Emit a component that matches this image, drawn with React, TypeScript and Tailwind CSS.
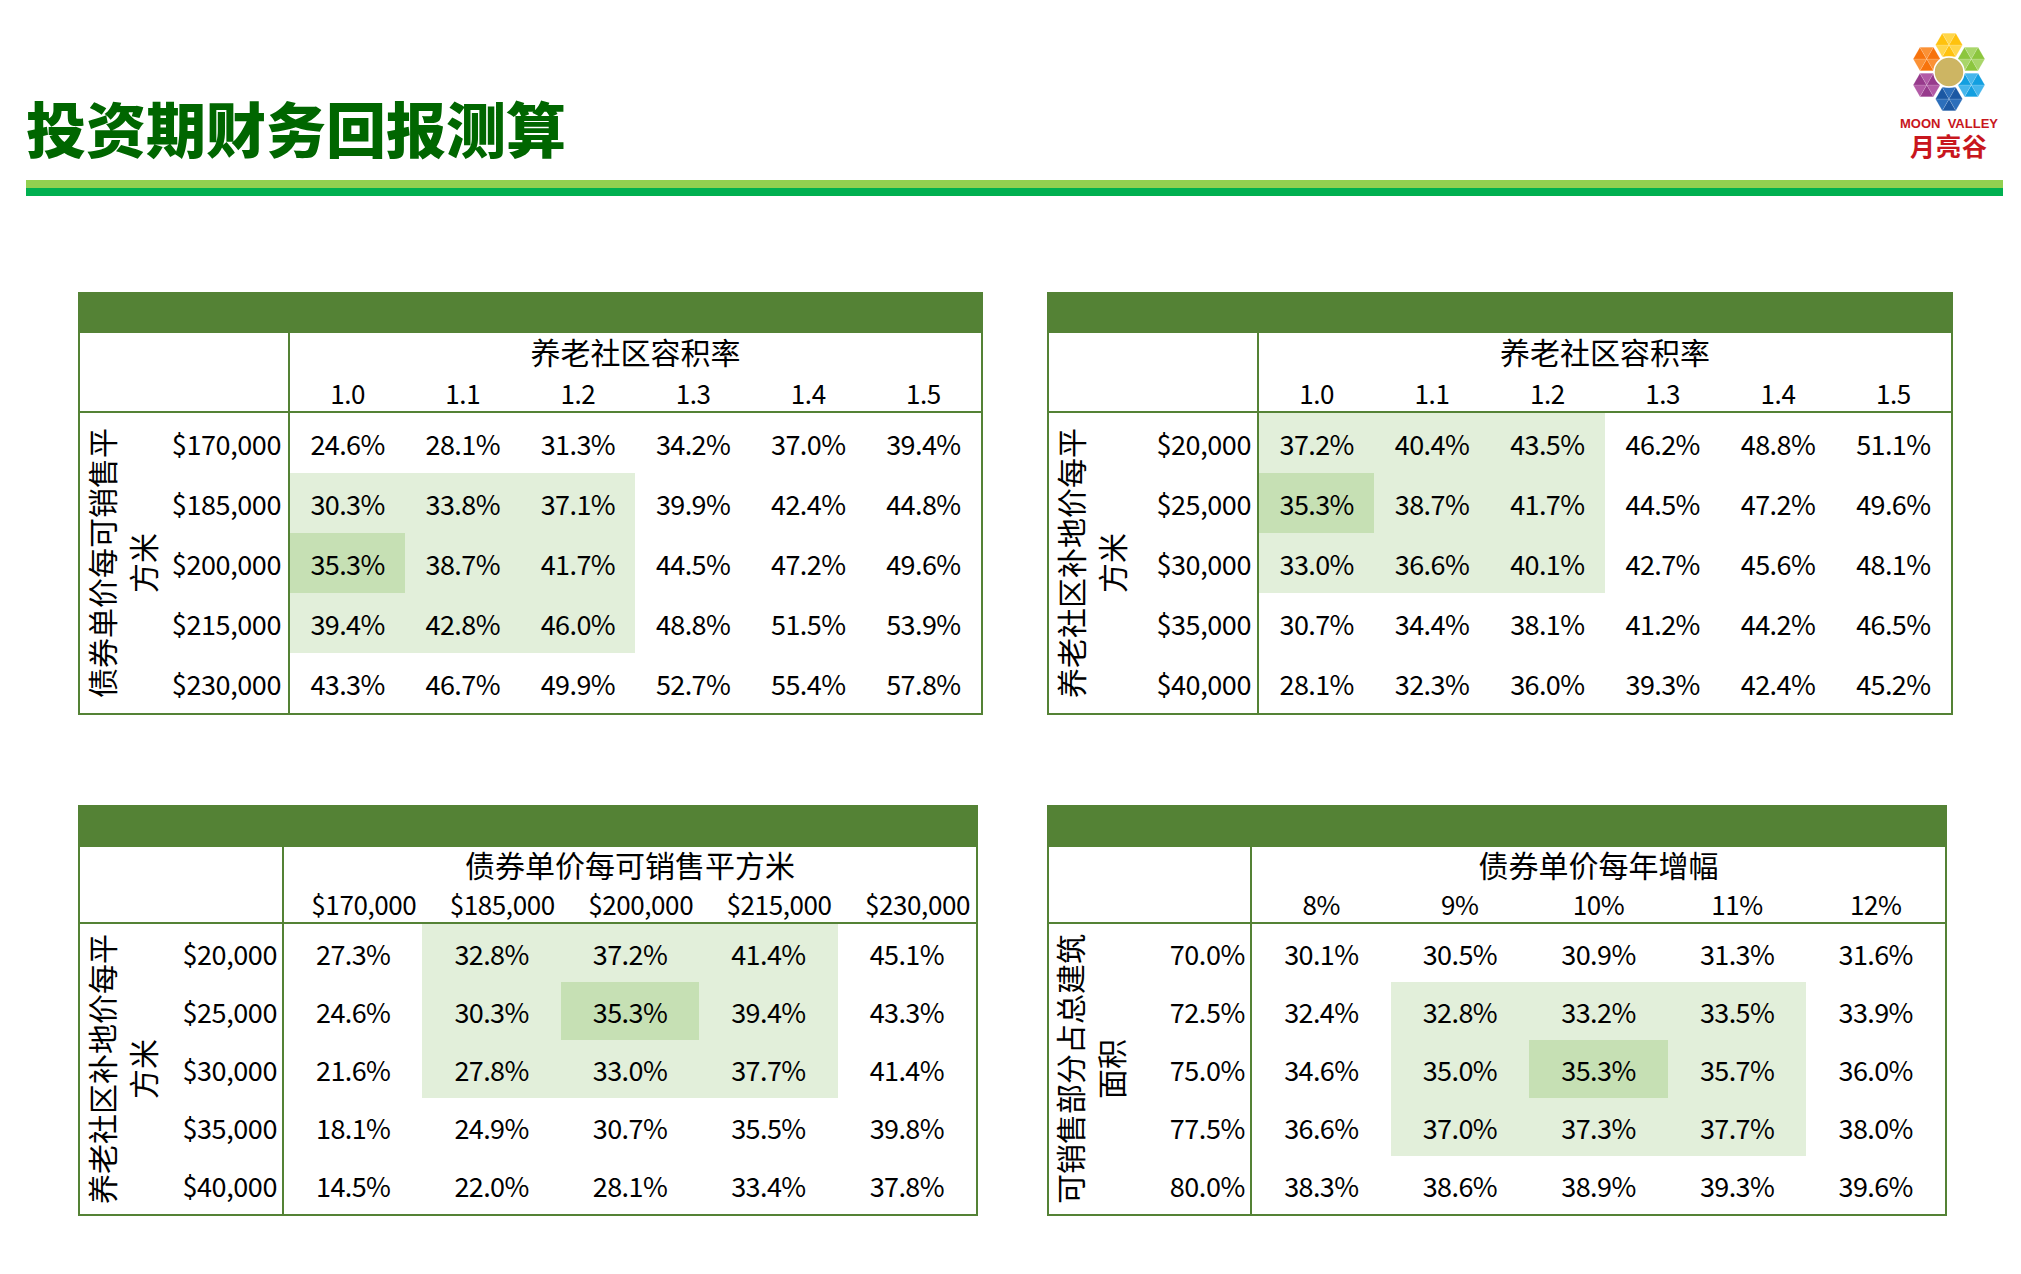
import React from 'react';

type Cfg = {
  w: string;
  cols: string;
  span: string;
  bar: string;
  titleH: string;
  subH: string;
  rowH: string;
  title: string;
  heads: string[];
  headCls: string;
  rowLabels: string[];
  rowPad: string;
  vlabel: [string, string];
  data: string[][];
  light: [number, number, number, number];
  dark: [number, number];
};

const toRows = (s: string) => s.trim().split('\n').map((l) => l.trim().split(/\s+/).map((v) => v + '%'));

const tables: Cfg[] = [
  {
    w: 'w-[905px]',
    cols: 'grid-cols-[84px_126px_repeat(6,1fr)]',
    span: 'col-span-6',
    bar: 'h-[39px]',
    titleH: 'h-[42px] pb-[6px]',
    subH: 'h-[38px]',
    rowH: 'h-[60px]',
    title: '养老社区容积率',
    heads: ['1.0', '1.1', '1.2', '1.3', '1.4', '1.5'],
    headCls: 'justify-center',
    rowLabels: ['$170,000', '$185,000', '$200,000', '$215,000', '$230,000'],
    rowPad: 'pr-[7px]',
    vlabel: ['债券单价每可销售平', '方米'],
    data: toRows(`
      24.6 28.1 31.3 34.2 37.0 39.4
      30.3 33.8 37.1 39.9 42.4 44.8
      35.3 38.7 41.7 44.5 47.2 49.6
      39.4 42.8 46.0 48.8 51.5 53.9
      43.3 46.7 49.9 52.7 55.4 57.8`),
    light: [1, 3, 0, 2],
    dark: [2, 0],
  },
  {
    w: 'w-[906px]',
    cols: 'grid-cols-[84px_126px_repeat(6,1fr)]',
    span: 'col-span-6',
    bar: 'h-[39px]',
    titleH: 'h-[42px] pb-[6px]',
    subH: 'h-[38px]',
    rowH: 'h-[60px]',
    title: '养老社区容积率',
    heads: ['1.0', '1.1', '1.2', '1.3', '1.4', '1.5'],
    headCls: 'justify-center',
    rowLabels: ['$20,000', '$25,000', '$30,000', '$35,000', '$40,000'],
    rowPad: 'pr-[6px]',
    vlabel: ['养老社区补地价每平', '方米'],
    data: toRows(`
      37.2 40.4 43.5 46.2 48.8 51.1
      35.3 38.7 41.7 44.5 47.2 49.6
      33.0 36.6 40.1 42.7 45.6 48.1
      30.7 34.4 38.1 41.2 44.2 46.5
      28.1 32.3 36.0 39.3 42.4 45.2`),
    light: [0, 2, 0, 2],
    dark: [1, 0],
  },
  {
    w: 'w-[900px]',
    cols: 'grid-cols-[84px_120px_repeat(5,1fr)]',
    span: 'col-span-5',
    bar: 'h-[40px]',
    titleH: 'h-[38px] pb-[5px]',
    subH: 'h-[39px]',
    rowH: 'h-[58px]',
    title: '债券单价每可销售平方米',
    heads: ['$170,000', '$185,000', '$200,000', '$215,000', '$230,000'],
    headCls: 'justify-end pr-[6px]',
    rowLabels: ['$20,000', '$25,000', '$30,000', '$35,000', '$40,000'],
    rowPad: 'pr-[5px]',
    vlabel: ['养老社区补地价每平', '方米'],
    data: toRows(`
      27.3 32.8 37.2 41.4 45.1
      24.6 30.3 35.3 39.4 43.3
      21.6 27.8 33.0 37.7 41.4
      18.1 24.9 30.7 35.5 39.8
      14.5 22.0 28.1 33.4 37.8`),
    light: [0, 2, 1, 3],
    dark: [1, 2],
  },
  {
    w: 'w-[900px]',
    cols: 'grid-cols-[82px_121px_repeat(5,1fr)]',
    span: 'col-span-5',
    bar: 'h-[40px]',
    titleH: 'h-[38px] pb-[5px]',
    subH: 'h-[39px]',
    rowH: 'h-[58px]',
    title: '债券单价每年增幅',
    heads: ['8%', '9%', '10%', '11%', '12%'],
    headCls: 'justify-center',
    rowLabels: ['70.0%', '72.5%', '75.0%', '77.5%', '80.0%'],
    rowPad: 'pr-[5px]',
    vlabel: ['可销售部分占总建筑', '面积'],
    data: toRows(`
      30.1 30.5 30.9 31.3 31.6
      32.4 32.8 33.2 33.5 33.9
      34.6 35.0 35.3 35.7 36.0
      36.6 37.0 37.3 37.7 38.0
      38.3 38.6 38.9 39.3 39.6`),
    light: [1, 3, 1, 3],
    dark: [2, 2],
  },
];

function cellBg(cfg: Cfg, r: number, c: number) {
  if (r === cfg.dark[0] && c === cfg.dark[1]) return 'bg-[#c6e0b4]';
  const [r0, r1, c0, c1] = cfg.light;
  if (r >= r0 && r <= r1 && c >= c0 && c <= c1) return 'bg-[#e2efda]';
  return '';
}

function Table({ cfg }: { cfg: Cfg }) {
  return (
    <div className={`${cfg.w} border-2 border-[#548235] flex flex-col text-black`}>
      <div className={`${cfg.bar} bg-[#548235]`} />
      <div className={`grid ${cfg.cols}`}>
        <div className="col-span-2 row-span-2 border-r-2 border-b-2 border-[#548235]" />
        <div className={`${cfg.span} ${cfg.titleH} flex items-center justify-center text-[30px] leading-none`}>
          {cfg.title}
        </div>
        {cfg.heads.map((h) => (
          <div
            key={h}
            className={`${cfg.subH} ${cfg.headCls} flex items-center border-b-2 border-[#548235] text-[26px] tracking-[-0.4px] leading-none`}
          >
            {h}
          </div>
        ))}

        <div className="row-span-5 flex items-center justify-center">
          <div className="w-0 flex justify-center">
            <div className="shrink-0 -rotate-90 whitespace-nowrap text-center text-[30px] leading-[41px]">
              <div>{cfg.vlabel[0]}</div>
              <div>{cfg.vlabel[1]}</div>
            </div>
          </div>
        </div>

        {cfg.data.map((row, r) => (
          <React.Fragment key={r}>
            <div
              className={`${cfg.rowH} ${cfg.rowPad} col-start-2 flex items-center justify-end border-r-2 border-[#548235] text-[27px] tracking-[-0.4px] leading-none`}
            >
              {cfg.rowLabels[r]}
            </div>
            {row.map((v, c) => (
              <div
                key={c}
                className={`${cfg.rowH} ${cellBg(cfg, r, c)} flex items-center justify-center text-[27px] tracking-[-0.6px] leading-none`}
              >
                {v}
              </div>
            ))}
          </React.Fragment>
        ))}
      </div>
    </div>
  );
}

function Hex({ cx, cy, r, a, b }: { cx: number; cy: number; r: number; a: string; b: string }) {
  const pts = Array.from({ length: 6 }, (_, i) => {
    const t = (Math.PI / 3) * i;
    return [cx + r * Math.cos(t), cy + r * Math.sin(t)];
  });
  return (
    <g>
      {pts.map((p, i) => {
        const q = pts[(i + 1) % 6];
        return (
          <polygon
            key={i}
            points={`${cx},${cy} ${p[0]},${p[1]} ${q[0]},${q[1]}`}
            fill={i % 2 ? a : b}
            stroke="#ffffff"
            strokeOpacity={0.35}
            strokeWidth={0.4}
          />
        );
      })}
    </g>
  );
}

function Logo() {
  return (
    <div className="w-[110px] pt-[30px] flex flex-col items-center">
      <svg width="80" height="84" viewBox="0 0 80 84">
        <Hex cx={40} cy={15} r={13.5} a="#ffc20e" b="#ffd64a" />
        <Hex cx={17.7} cy={29} r={13.5} a="#f7730c" b="#fb9135" />
        <Hex cx={62.3} cy={29} r={13.5} a="#8cc63e" b="#a9d66a" />
        <Hex cx={17.7} cy={55} r={13.5} a="#973a8c" b="#b25aa6" />
        <Hex cx={62.3} cy={55} r={13.5} a="#129fe0" b="#45b6ec" />
        <Hex cx={40} cy={69} r={13.5} a="#1b58a3" b="#2c6fbb" />
        <circle cx={40} cy={42} r={15} fill="#cdb563" stroke="#ffffff" strokeWidth={1.5} />
      </svg>
      <div className="mt-[2px] font-['Liberation_Sans',sans-serif] font-bold text-[13px] leading-[15px] text-[#c8161d] whitespace-nowrap">
        MOON&nbsp;&nbsp;VALLEY
      </div>
      <div className="mt-[1px] font-bold text-[25px] leading-[26px] text-[#c8161d] tracking-[1px]">月亮谷</div>
    </div>
  );
}

export default function App() {
  return (
    <div className="w-[2021px] h-[1274px] bg-white overflow-hidden font-['Noto_Sans_CJK_SC',sans-serif]">
      <div className="h-[180px] flex justify-between pl-[26px] pr-[17px]">
        <h1 className="pt-[97px] text-[60px] leading-[60px] font-black text-[#006600]">投资期财务回报测算</h1>
        <Logo />
      </div>
      <div className="ml-[26px] mr-[18px]">
        <div className="h-[8px] bg-[#92d050]" />
        <div className="h-[8px] bg-[#00b050]" />
      </div>

      <div className="pl-[78px] pt-[96px]">
        <div className="flex items-start gap-[64px]">
          <Table cfg={tables[0]} />
          <Table cfg={tables[1]} />
        </div>
        <div className="mt-[90px] flex items-start gap-[69px]">
          <Table cfg={tables[2]} />
          <Table cfg={tables[3]} />
        </div>
      </div>
    </div>
  );
}
